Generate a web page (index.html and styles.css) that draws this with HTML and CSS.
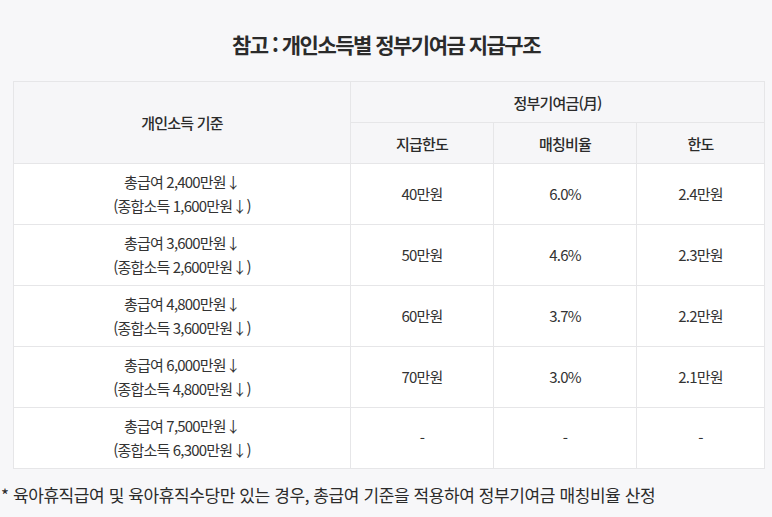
FILE: index.html
```html
<!DOCTYPE html>
<html lang="ko">
<head>
<meta charset="utf-8">
<link rel="stylesheet" href="styles.css">
</head>
<body>
<div class="page">
  <h2 class="title">참고 : 개인소득별 정부기여금 지급구조</h2>
  <table class="grid">
    <colgroup>
      <col class="c1"><col class="c2"><col class="c3"><col class="c4">
    </colgroup>
    <thead>
      <tr>
        <th rowspan="2">개인소득 기준</th>
        <th colspan="3">정부기여금(月)</th>
      </tr>
      <tr>
        <th>지급한도</th>
        <th>매칭비율</th>
        <th>한도</th>
      </tr>
    </thead>
    <tbody>
      <tr><td>총급여 2,400만원↓<br>(종합소득 1,600만원↓)</td><td>40만원</td><td>6.0%</td><td>2.4만원</td></tr>
      <tr><td>총급여 3,600만원↓<br>(종합소득 2,600만원↓)</td><td>50만원</td><td>4.6%</td><td>2.3만원</td></tr>
      <tr><td>총급여 4,800만원↓<br>(종합소득 3,600만원↓)</td><td>60만원</td><td>3.7%</td><td>2.2만원</td></tr>
      <tr><td>총급여 6,000만원↓<br>(종합소득 4,800만원↓)</td><td>70만원</td><td>3.0%</td><td>2.1만원</td></tr>
      <tr><td>총급여 7,500만원↓<br>(종합소득 6,300만원↓)</td><td>-</td><td>-</td><td>-</td></tr>
    </tbody>
  </table>
  <p class="note">* 육아휴직급여 및 육아휴직수당만 있는 경우, 총급여 기준을 적용하여 정부기여금 매칭비율 산정</p>
</div>
</body>
</html>
```
FILE: styles.css
```css
html, body {
  margin: 0;
  padding: 0;
  background: #f7f7f9;
}
body {
  font-family: "Noto Sans CJK KR", "Noto Sans", sans-serif;
  color: #333;
}
.page {
  width: 772px;
  height: 517px;
  overflow: hidden;
}
.title {
  margin: 0;
  padding-top: 29px;
  height: 81px;
  box-sizing: border-box;
  text-align: center;
  font-size: 21px;
  line-height: 30px;
  font-weight: 700;
  letter-spacing: -1.5px;
  color: #2b2b2b;
}
.grid {
  margin-left: 13px;
  width: 751px;
  border-collapse: collapse;
  table-layout: fixed;
  background: #fff;
}
.c1 { width: 337px; }
.c2 { width: 143px; }
.c3 { width: 143px; }
.c4 { width: 128px; }
.grid th, .grid td {
  border: 1px solid #e6e6e8;
  text-align: center;
  vertical-align: middle;
  padding: 0;
  letter-spacing: -0.8px;
}
.grid th {
  background: #f6f6f8;
  height: 40px;
  font-size: 15px;
  font-weight: 500;
  color: #2b2b2b;
}
.grid td {
  height: 60px;
  font-size: 15px;
  line-height: 24px;
  color: #333;
}
.note {
  margin: 14px 0 0 1px;
  font-size: 17px;
  line-height: 24px;
  letter-spacing: -0.4px;
  color: #2b2b2b;
}
```
